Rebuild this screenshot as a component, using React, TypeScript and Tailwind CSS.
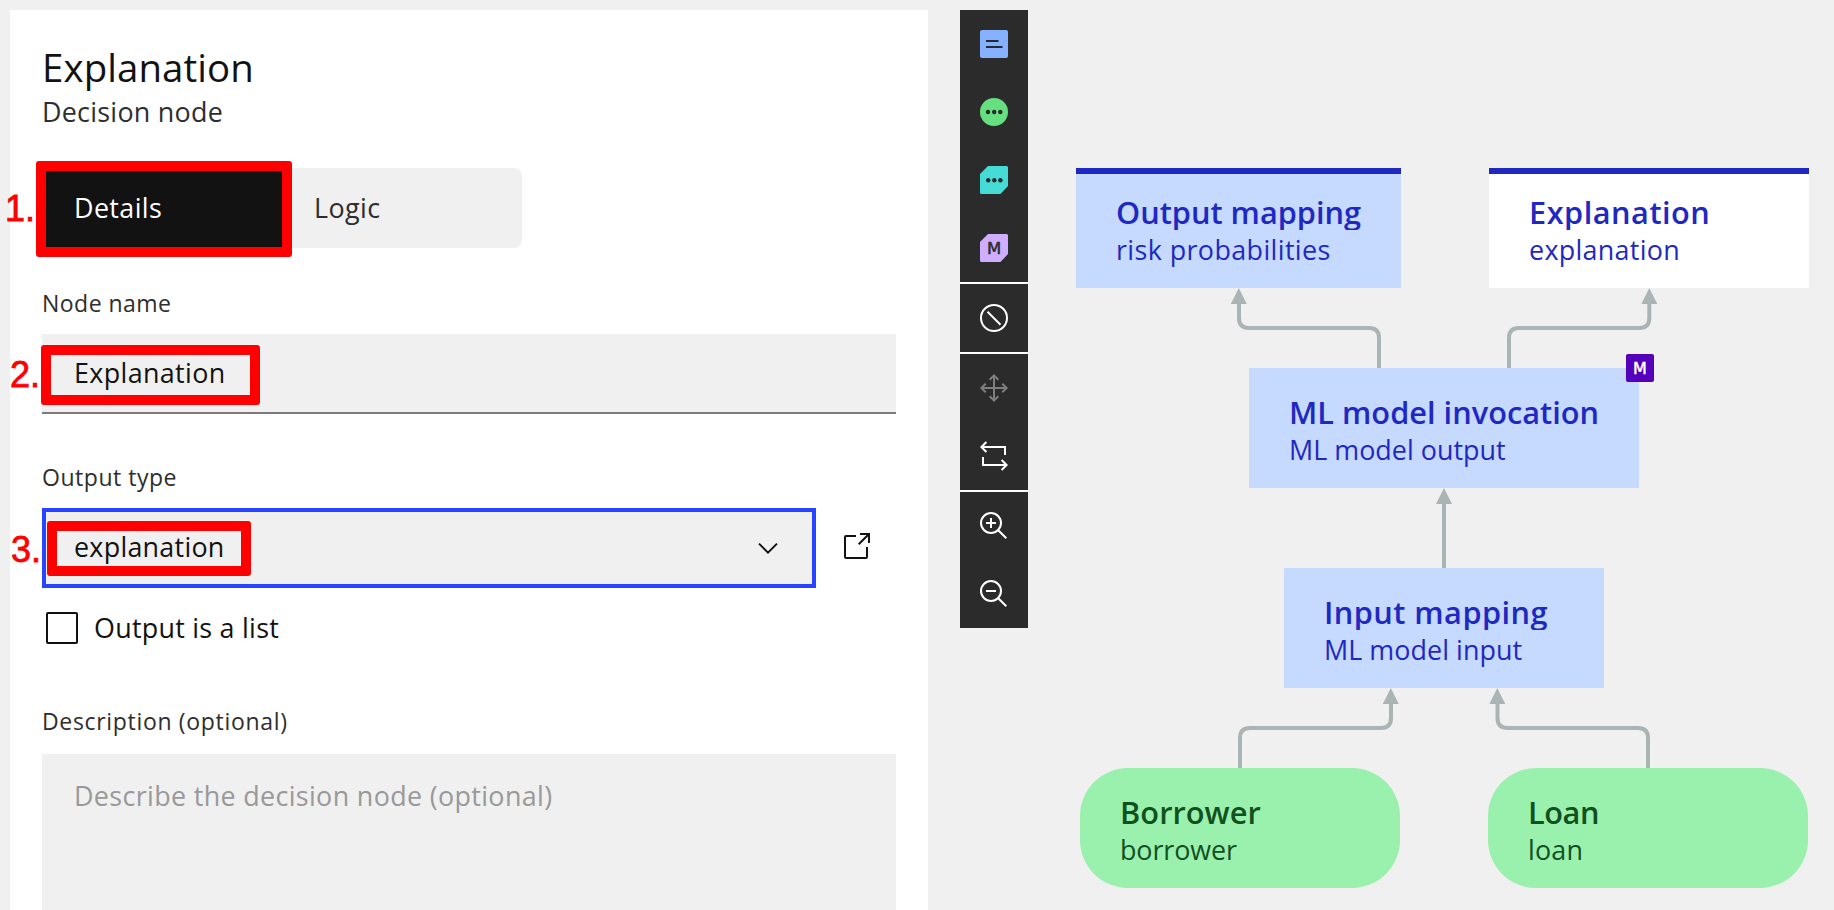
import React from "react";

function Toolbar() {
  const button = "flex h-[68px] w-[68px] items-center justify-center";
  const icon = "h-7 w-7 overflow-visible";
  return (
    <nav className="ml-8 flex w-[68px] flex-col gap-[2px] self-start bg-white">
      <div className="bg-[#2b2b2b]">
        <div className={button}>
          <svg className={icon} viewBox="0 0 28 28">
            <rect width="28" height="28" rx="2" fill="#85b1ff" />
            <path d="M6 11h12.5M6 17h16.5" stroke="#262b33" strokeWidth="2" />
          </svg>
        </div>
        <div className={button}>
          <svg className={icon} viewBox="0 0 28 28">
            <circle cx="14" cy="14" r="14" fill="#65df80" />
            <g fill="#262b28">
              <circle cx="8" cy="14" r="2.2" />
              <circle cx="14.2" cy="14" r="2.2" />
              <circle cx="20.3" cy="14" r="2.2" />
            </g>
          </svg>
        </div>
        <div className={button}>
          <svg className={icon} viewBox="0 0 28 28">
            <path d="M8 0H26.5A1.5 1.5 0 0 1 28 1.5V20L20.5 28H1.5A1.5 1.5 0 0 1 0 26.5V8Z" fill="#45dbd6" />
            <g fill="#262b2b">
              <circle cx="8.2" cy="14.3" r="2.2" />
              <circle cx="14.3" cy="14.3" r="2.2" />
              <circle cx="20.4" cy="14.3" r="2.2" />
            </g>
          </svg>
        </div>
        <div className={button}>
          <svg className={icon} viewBox="0 0 28 28">
            <path d="M8 0H26.5A1.5 1.5 0 0 1 28 1.5V20L20.5 28H1.5A1.5 1.5 0 0 1 0 26.5V8Z" fill="#cfadff" />
            <text x="14" y="20" textAnchor="middle" fill="#2b2b2b" stroke="#2b2b2b" strokeWidth="0.5" className="font-['DejaVu_Sans',sans-serif] text-[16.5px]">M</text>
          </svg>
        </div>
      </div>
      <div className="bg-[#2b2b2b]">
        <div className={button}>
          <svg className={icon} viewBox="0 0 28 28" fill="none" stroke="#fff" strokeWidth="2">
            <circle cx="14" cy="14" r="13" />
            <path d="M7.5 7.8L20.5 20.7" />
          </svg>
        </div>
      </div>
      <div className="bg-[#2b2b2b]">
        <div className={button}>
          <svg className={icon} viewBox="0 0 28 28" fill="none" stroke="#7e7e7e" strokeWidth="2">
            <path d="M1.5 14H26.5M14 1.5V26.5M5.7 9.7L1.4 14L5.7 18.3M22.3 9.7L26.6 14L22.3 18.3M9.7 5.7L14 1.4L18.3 5.7M9.7 22.3L14 26.6L18.3 22.3" />
          </svg>
        </div>
        <div className={button}>
          <svg className={icon} viewBox="0 0 28 28" fill="none" stroke="#fff" strokeWidth="2">
            <path d="M1.5 5H25V13M6.4 0L1.4 5L6.4 10" />
            <path d="M3 15V23H26.5M21.6 18L26.6 23L21.6 28" />
          </svg>
        </div>
      </div>
      <div className="bg-[#2b2b2b]">
        <div className={button}>
          <svg className={icon} viewBox="0 0 28 28" fill="none" stroke="#fff" strokeWidth="2">
            <circle cx="11" cy="11" r="10" />
            <path d="M18 18L26.3 26.3M6 11H16M11 6V16" />
          </svg>
        </div>
        <div className={button}>
          <svg className={icon} viewBox="0 0 28 28" fill="none" stroke="#fff" strokeWidth="2">
            <circle cx="11" cy="11" r="10" />
            <path d="M18 18L26.3 26.3M6 11H16" />
          </svg>
        </div>
      </div>
    </nav>
  );
}

type NodeProps = {
  box: string;
  title: string;
  subtitle: string;
  titleTracking: string;
  subtitleTracking: string;
};

function DiagramNode({ box, title, subtitle, titleTracking, subtitleTracking }: NodeProps) {
  return (
    <div className={`absolute h-[120px] pl-10 whitespace-nowrap ${box}`}>
      <div className={`h-[38px] overflow-hidden text-[30.72px] leading-[40px] font-semibold ${titleTracking}`}>{title}</div>
      <div className={`mt-[2px] text-[26.88px] leading-[36px] ${subtitleTracking}`}>{subtitle}</div>
    </div>
  );
}

function Diagram() {
  return (
    <div className="absolute inset-0">
      <svg className="absolute inset-0 h-[910px] w-[1834px]" viewBox="0 0 1834 910">
        <g fill="none" stroke="#aab4b4" strokeWidth="4">
          <path d="M1239 300V318Q1239 328 1249 328H1369Q1379 328 1379 338V370" />
          <path d="M1649.3 300V318Q1649.3 328 1639.3 328H1519Q1509 328 1509 338V370" />
          <path d="M1444 500V570" />
          <path d="M1391 700V718Q1391 728 1381 728H1250Q1240 728 1240 738V770" />
          <path d="M1497.5 700V718Q1497.5 728 1507.5 728H1638Q1648 728 1648 738V770" />
        </g>
        <g fill="#aab4b4">
          <path d="M1238.8 288L1246.8 304H1230.8Z" />
          <path d="M1649.3 288L1657.3 304H1641.3Z" />
          <path d="M1444 488L1452 504H1436Z" />
          <path d="M1390.8 688L1398.8 704H1382.8Z" />
          <path d="M1497.3 688L1505.3 704H1489.3Z" />
        </g>
      </svg>
      <DiagramNode box="left-[1076px] top-[168px] w-[325px] border-t-[6px] border-[#1f28c1] bg-[#c6d9ff] pt-[18px] text-[#1f28c1]" title="Output mapping" subtitle="risk probabilities" titleTracking="tracking-[0px]" subtitleTracking="tracking-[0.39px]" />
      <DiagramNode box="left-[1489px] top-[168px] w-[320px] border-t-[6px] border-[#1f28c1] bg-white pt-[18px] text-[#1f28c1]" title="Explanation" subtitle="explanation" titleTracking="tracking-[0.5px]" subtitleTracking="tracking-[0.3px]" />
      <DiagramNode box="left-[1249px] top-[368px] w-[390px] bg-[#c6d9ff] pt-6 text-[#1f28c1]" title="ML model invocation" subtitle="ML model output" titleTracking="tracking-[0.02px]" subtitleTracking="tracking-[0.02px]" />
      <DiagramNode box="left-[1284px] top-[568px] w-[320px] bg-[#c6d9ff] pt-6 text-[#1f28c1]" title="Input mapping" subtitle="ML model input" titleTracking="tracking-[0.45px]" subtitleTracking="tracking-[0.06px]" />
      <DiagramNode box="left-[1080px] top-[768px] w-[320px] rounded-[48px] bg-[#9af0ad] pt-6 text-[#10511f]" title="Borrower" subtitle="borrower" titleTracking="tracking-[0.07px]" subtitleTracking="tracking-[-0.09px]" />
      <DiagramNode box="left-[1488px] top-[768px] w-[320px] rounded-[48px] bg-[#9af0ad] pt-6 text-[#10511f]" title="Loan" subtitle="loan" titleTracking="tracking-[-0.42px]" subtitleTracking="tracking-[0.21px]" />
      <svg className="absolute left-[1626px] top-[354px] h-7 w-7" viewBox="0 0 28 28">
        <rect width="28" height="28" rx="2" fill="#5500ba" />
        <text x="14" y="19.8" textAnchor="middle" fill="#fff" stroke="#fff" strokeWidth="0.5" className="font-['DejaVu_Sans',sans-serif] text-[16px]">M</text>
      </svg>
    </div>
  );
}

function DetailsPanel() {
  return (
    <section className="h-[900px] w-[918px] bg-white px-8 pt-8">
      <h1 className="text-[38.4px] leading-[50px] tracking-[0.1px] text-[#121212]">Explanation</h1>
      <p className="text-[26.88px] leading-[40px] tracking-[0.26px] text-[#2e2e2e]">Decision node</p>

      <div className="mt-9 flex h-20 w-[480px] overflow-hidden rounded-[8px] bg-[#f0f0f0] text-[26.88px]">
        <button className="w-60 bg-[#121212] px-8 text-left tracking-[0.39px] text-white">Details</button>
        <button className="w-60 px-8 text-left tracking-[0.4px] text-[#2e2e2e]">Logic</button>
      </div>

      <div className="mt-[39px] text-[23.04px] leading-[32px] tracking-[0.45px] text-[#2e2e2e]">Node name</div>
      <div className="mt-[15px] flex h-20 w-[854px] items-center border-b-2 border-[#7b7b7d] bg-[#f0f0f0] px-8 text-[26.88px] tracking-[0.36px] text-[#121212]">
        Explanation
      </div>

      <div className="mt-[47px] text-[23.04px] leading-[32px] tracking-[0.51px] text-[#2e2e2e]">Output type</div>
      <div className="mt-[15px] flex items-center">
        <div className="flex h-20 w-[774px] items-center justify-between border-4 border-[#2844ff] bg-[#f0f0f0] pr-[33px] pl-7 text-[26.88px] tracking-[0.26px] text-[#121212]">
          <span className="pb-[2px]">explanation</span>
          <svg className="h-3 w-[22px]" viewBox="0 0 22 12" fill="none" stroke="#121212" strokeWidth="2">
            <path d="M2 1.6L11 10.6L20 1.6" />
          </svg>
        </div>
        <svg className="mb-1 ml-[26px] h-[30px] w-[30px]" viewBox="842 531 30 30" fill="none" stroke="#121212" strokeWidth="2">
          <path d="M856 536H846Q845 536 845 537V557Q845 558 846 558H866Q867 558 867 557V547" />
          <path d="M860 534H869V543M869 534L858.7 544.3" />
        </svg>
      </div>

      <div className="mt-6 ml-1 flex h-8 items-center text-[26.88px] tracking-[0.26px] text-[#121212]">
        <span className="h-8 w-8 rounded-[2px] border-2 border-[#121212]" />
        <span className="ml-4">Output is a list</span>
      </div>

      <div className="mt-[61px] text-[23.04px] leading-[32px] tracking-[0.66px] text-[#2e2e2e]">Description (optional)</div>
      <div className="mt-[17px] h-[156px] w-[854px] bg-[#f0f0f0] px-8 pt-[22px] text-[26.88px] leading-[40px] tracking-[0.35px] text-[#999]">
        Describe the decision node (optional)
      </div>
    </section>
  );
}

function Callouts() {
  const label = "absolute font-['Liberation_Sans',sans-serif] text-[36px] leading-[40px] text-[#ff0000] [-webkit-text-stroke:0.8px_#ff0000]";
  const frame = "absolute rounded-[3px] border-[10px] border-[#ff0000]";
  return (
    <div className="pointer-events-none absolute inset-0">
      <span className={`${label} left-[5px] top-[189px]`}>1.</span>
      <div className={`${frame} left-[36px] top-[161px] h-[96px] w-[256px]`} />
      <span className={`${label} left-[10px] top-[355px]`}>2.</span>
      <div className={`${frame} left-[41px] top-[345px] h-[60px] w-[219px]`} />
      <span className={`${label} left-[11px] top-[530px]`}>3.</span>
      <div className={`${frame} left-[47px] top-[521px] h-[55px] w-[204px]`} />
    </div>
  );
}

export default function App() {
  return (
    <main className="relative flex h-[910px] w-[1834px] overflow-hidden bg-[#f0f0f0] pt-[10px] pl-[10px] font-['Open_Sans',sans-serif]">
      <DetailsPanel />
      <Diagram />
      <Toolbar />
      <Callouts />
    </main>
  );
}
